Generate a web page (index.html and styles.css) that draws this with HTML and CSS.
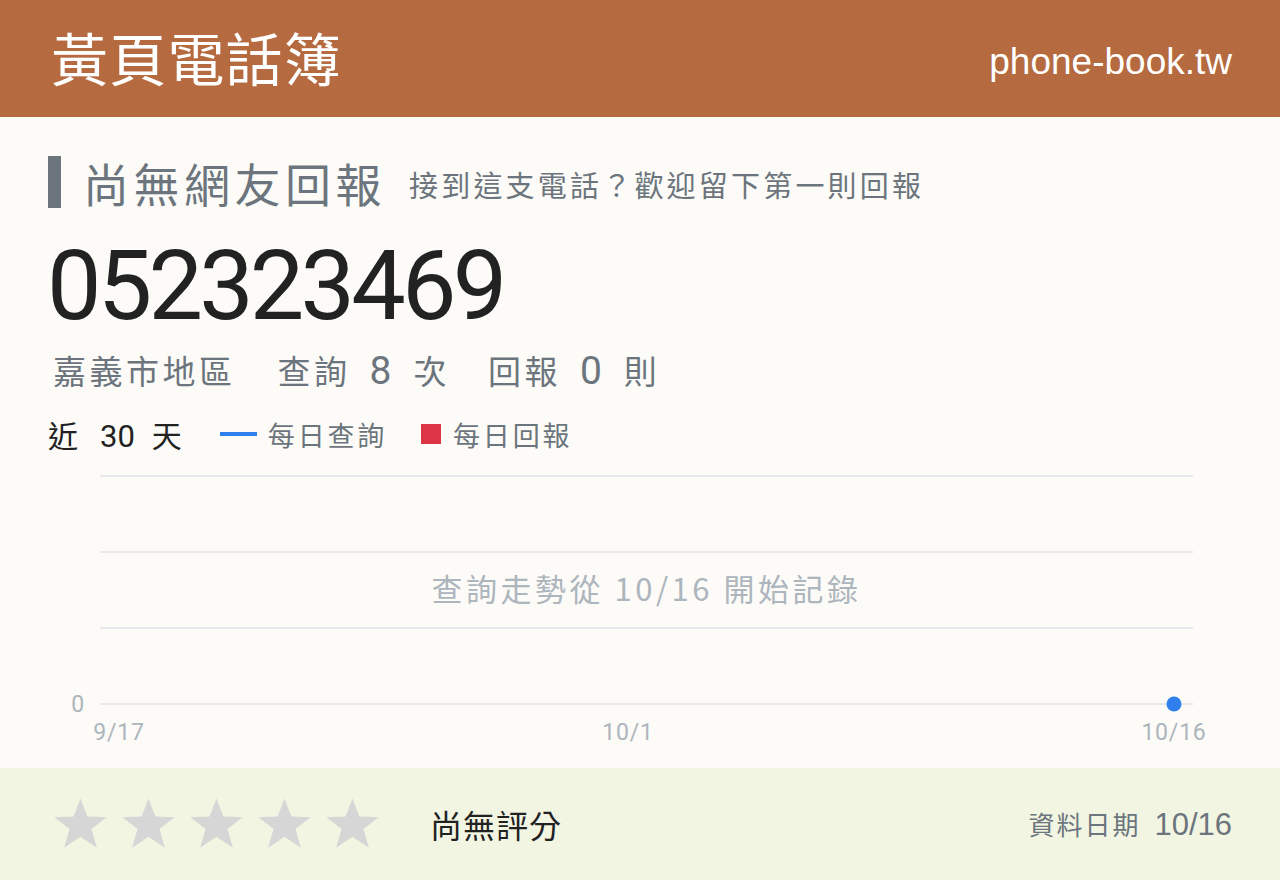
FILE: index.html
```html
<!DOCTYPE html>
<html lang="zh-Hant">
<head>
<meta charset="utf-8">
<title>052323469 - 黃頁電話簿</title>
<link rel="stylesheet" href="styles.css">
</head>
<body>
<header class="site-header">
  <div class="brand">黃頁電話簿</div>
  <div class="domain">phone-book.tw</div>
</header>

<main class="content">
  <div class="report-title">
    <h2 class="report-status">尚無網友回報</h2>
    <span class="report-hint">接到這支電話？歡迎留下第一則回報</span>
  </div>

  <h1 class="number">052323469</h1>

  <div class="stats">
    <span class="stat">嘉義市地區</span>
    <span class="stat">查詢<b class="num">8</b>次</span>
    <span class="stat">回報<b class="num">0</b>則</span>
  </div>

  <div class="legend">
    <span class="range">近<b class="num">30</b>天</span>
    <span class="key"><i class="swatch line"></i>每日查詢</span>
    <span class="key"><i class="swatch box"></i>每日回報</span>
  </div>

  <svg class="chart" width="1184" height="301" viewBox="0 0 1184 301">
    <g class="grid">
      <line x1="52" y1="9" x2="1145" y2="9"/>
      <line x1="52" y1="85" x2="1145" y2="85"/>
      <line x1="52" y1="161" x2="1145" y2="161"/>
      <line x1="52" y1="237" x2="1145" y2="237"/>
    </g>
    <text class="chart-note" x="598.5" y="134" text-anchor="middle">查詢走勢從 10/16 開始記錄</text>
    <text class="axis" x="37" y="245" text-anchor="end">0</text>
    <text class="axis" x="71" y="273" text-anchor="middle">9/17</text>
    <text class="axis" x="580" y="273" text-anchor="middle">10/1</text>
    <text class="axis" x="1126" y="273" text-anchor="middle">10/16</text>
    <circle class="point" cx="1126" cy="237" r="7.5"/>
  </svg>
</main>

<footer class="rating-bar">
  <div class="stars">
    <svg class="star" viewBox="0 0 24 24"><polygon points="12,1 14.9,8.6 23,8.9 16.6,13.9 18.9,21.8 12,17.2 5.1,21.8 7.4,13.9 1,8.9 9.1,8.6"/></svg>
    <svg class="star" viewBox="0 0 24 24"><polygon points="12,1 14.9,8.6 23,8.9 16.6,13.9 18.9,21.8 12,17.2 5.1,21.8 7.4,13.9 1,8.9 9.1,8.6"/></svg>
    <svg class="star" viewBox="0 0 24 24"><polygon points="12,1 14.9,8.6 23,8.9 16.6,13.9 18.9,21.8 12,17.2 5.1,21.8 7.4,13.9 1,8.9 9.1,8.6"/></svg>
    <svg class="star" viewBox="0 0 24 24"><polygon points="12,1 14.9,8.6 23,8.9 16.6,13.9 18.9,21.8 12,17.2 5.1,21.8 7.4,13.9 1,8.9 9.1,8.6"/></svg>
    <svg class="star" viewBox="0 0 24 24"><polygon points="12,1 14.9,8.6 23,8.9 16.6,13.9 18.9,21.8 12,17.2 5.1,21.8 7.4,13.9 1,8.9 9.1,8.6"/></svg>
  </div>
  <span class="rating-text">尚無評分</span>
  <span class="data-date">資料日期<span class="date">10/16</span></span>
</footer>
</body>
</html>
```

FILE: styles.css
```css
* {
  box-sizing: border-box;
}

html, body {
  margin: 0;
  padding: 0;
}

body {
  width: 1280px;
  height: 880px;
  overflow: hidden;
  background: #fcfbf7;
  font-family: Roboto, "Noto Sans CJK TC", sans-serif;
  color: #222;
}

/* top brand bar */
.site-header {
  height: 117px;
  background: #b56a40;
  color: #fff;
  display: flex;
  align-items: center;
  justify-content: space-between;
  padding: 0 48px 0 51px;
}

.brand {
  font-family: "Noto Sans CJK TC", sans-serif;
  font-size: 57px;
  letter-spacing: 1.2px;
  line-height: 1;
  margin-top: -4px;
}

.domain {
  font-family: "Liberation Sans", Arial, sans-serif;
  font-size: 37px;
  line-height: 1;
  margin-top: 6px;
}

/* number details */
.content {
  padding: 39px 48px 0;
  height: 651px;
}

.report-title {
  display: flex;
  align-items: center;
  height: 52px;
  border-left: 13px solid #6c757d;
  padding-left: 22px;
}

.report-status {
  margin: 0;
  font-family: "Noto Sans CJK TC", sans-serif;
  font-weight: 400;
  font-size: 46px;
  letter-spacing: 4.5px;
  color: #6c757d;
  line-height: 1;
}

.report-hint {
  margin-left: 23px;
  margin-top: 4px;
  font-family: "Noto Sans CJK TC", sans-serif;
  font-size: 29px;
  letter-spacing: 3.2px;
  color: #6c757d;
}

.number {
  margin: 30px 0 0 -1px;
  font-family: Roboto, sans-serif;
  font-weight: 400;
  font-size: 97px;
  letter-spacing: -3.8px;
  line-height: 96px;
  color: #222;
}

.stats {
  margin-top: 14px;
  display: flex;
  gap: 38px;
  padding-left: 5px;
  font-family: "Noto Sans CJK TC", sans-serif;
  font-size: 33px;
  letter-spacing: 3.5px;
  color: #6c757d;
  line-height: 44px;
}

.stats .stat:nth-child(2) {
  margin-left: 4px;
}

.num {
  font-family: Roboto, sans-serif;
  font-weight: 400;
  font-size: 39px;
  letter-spacing: 0;
  margin: 0 22px 0 19px;
}

.legend {
  margin-top: 21px;
  display: flex;
  align-items: center;
  height: 40px;
  font-family: "Noto Sans CJK TC", sans-serif;
}

.range {
  font-size: 30px;
  letter-spacing: 2px;
  color: #222;
  margin-right: 36px;
}

.range .num {
  font-size: 31px;
  letter-spacing: 0;
  margin: 0 17px 0 20px;
}

.key {
  display: flex;
  align-items: center;
  font-size: 27px;
  letter-spacing: 2.8px;
  color: #6c757d;
  margin-right: 34px;
}

.swatch {
  display: inline-block;
}

.swatch.line {
  width: 37px;
  height: 4px;
  background: #2f80ed;
  margin-right: 11px;
}

.swatch.box {
  width: 20px;
  height: 20px;
  background: #dc3545;
  margin-right: 12px;
}

/* trend chart */
.chart {
  display: block;
  margin-top: 13px;
}

.grid line {
  stroke: #e6e8ec;
  stroke-width: 2;
}

.chart-note {
  font-family: "Noto Sans CJK TC", sans-serif;
  font-size: 31px;
  letter-spacing: 3.5px;
  fill: #adb5bd;
}

.axis {
  font-family: Roboto, sans-serif;
  font-size: 23px;
  letter-spacing: 0.8px;
  fill: #adb5bd;
}

.point {
  fill: #2f80ed;
}

/* rating strip */
.rating-bar {
  height: 112px;
  background: #f2f5e2;
  display: flex;
  align-items: center;
  padding: 0 48px 0 52px;
}

.stars {
  display: flex;
  gap: 11px;
}

.star {
  width: 57px;
  height: 57px;
  fill: #d6d6d6;
}

.rating-text {
  margin-left: 49px;
  font-family: "Noto Sans CJK TC", sans-serif;
  font-size: 32px;
  letter-spacing: 1px;
  color: #222;
}

.data-date {
  margin-left: auto;
  font-family: "Noto Sans CJK TC", sans-serif;
  font-size: 26px;
  letter-spacing: 2px;
  color: #6c757d;
}

.date {
  font-family: "Liberation Sans", Arial, sans-serif;
  font-size: 31px;
  letter-spacing: 0;
  margin-left: 14px;
}
```
